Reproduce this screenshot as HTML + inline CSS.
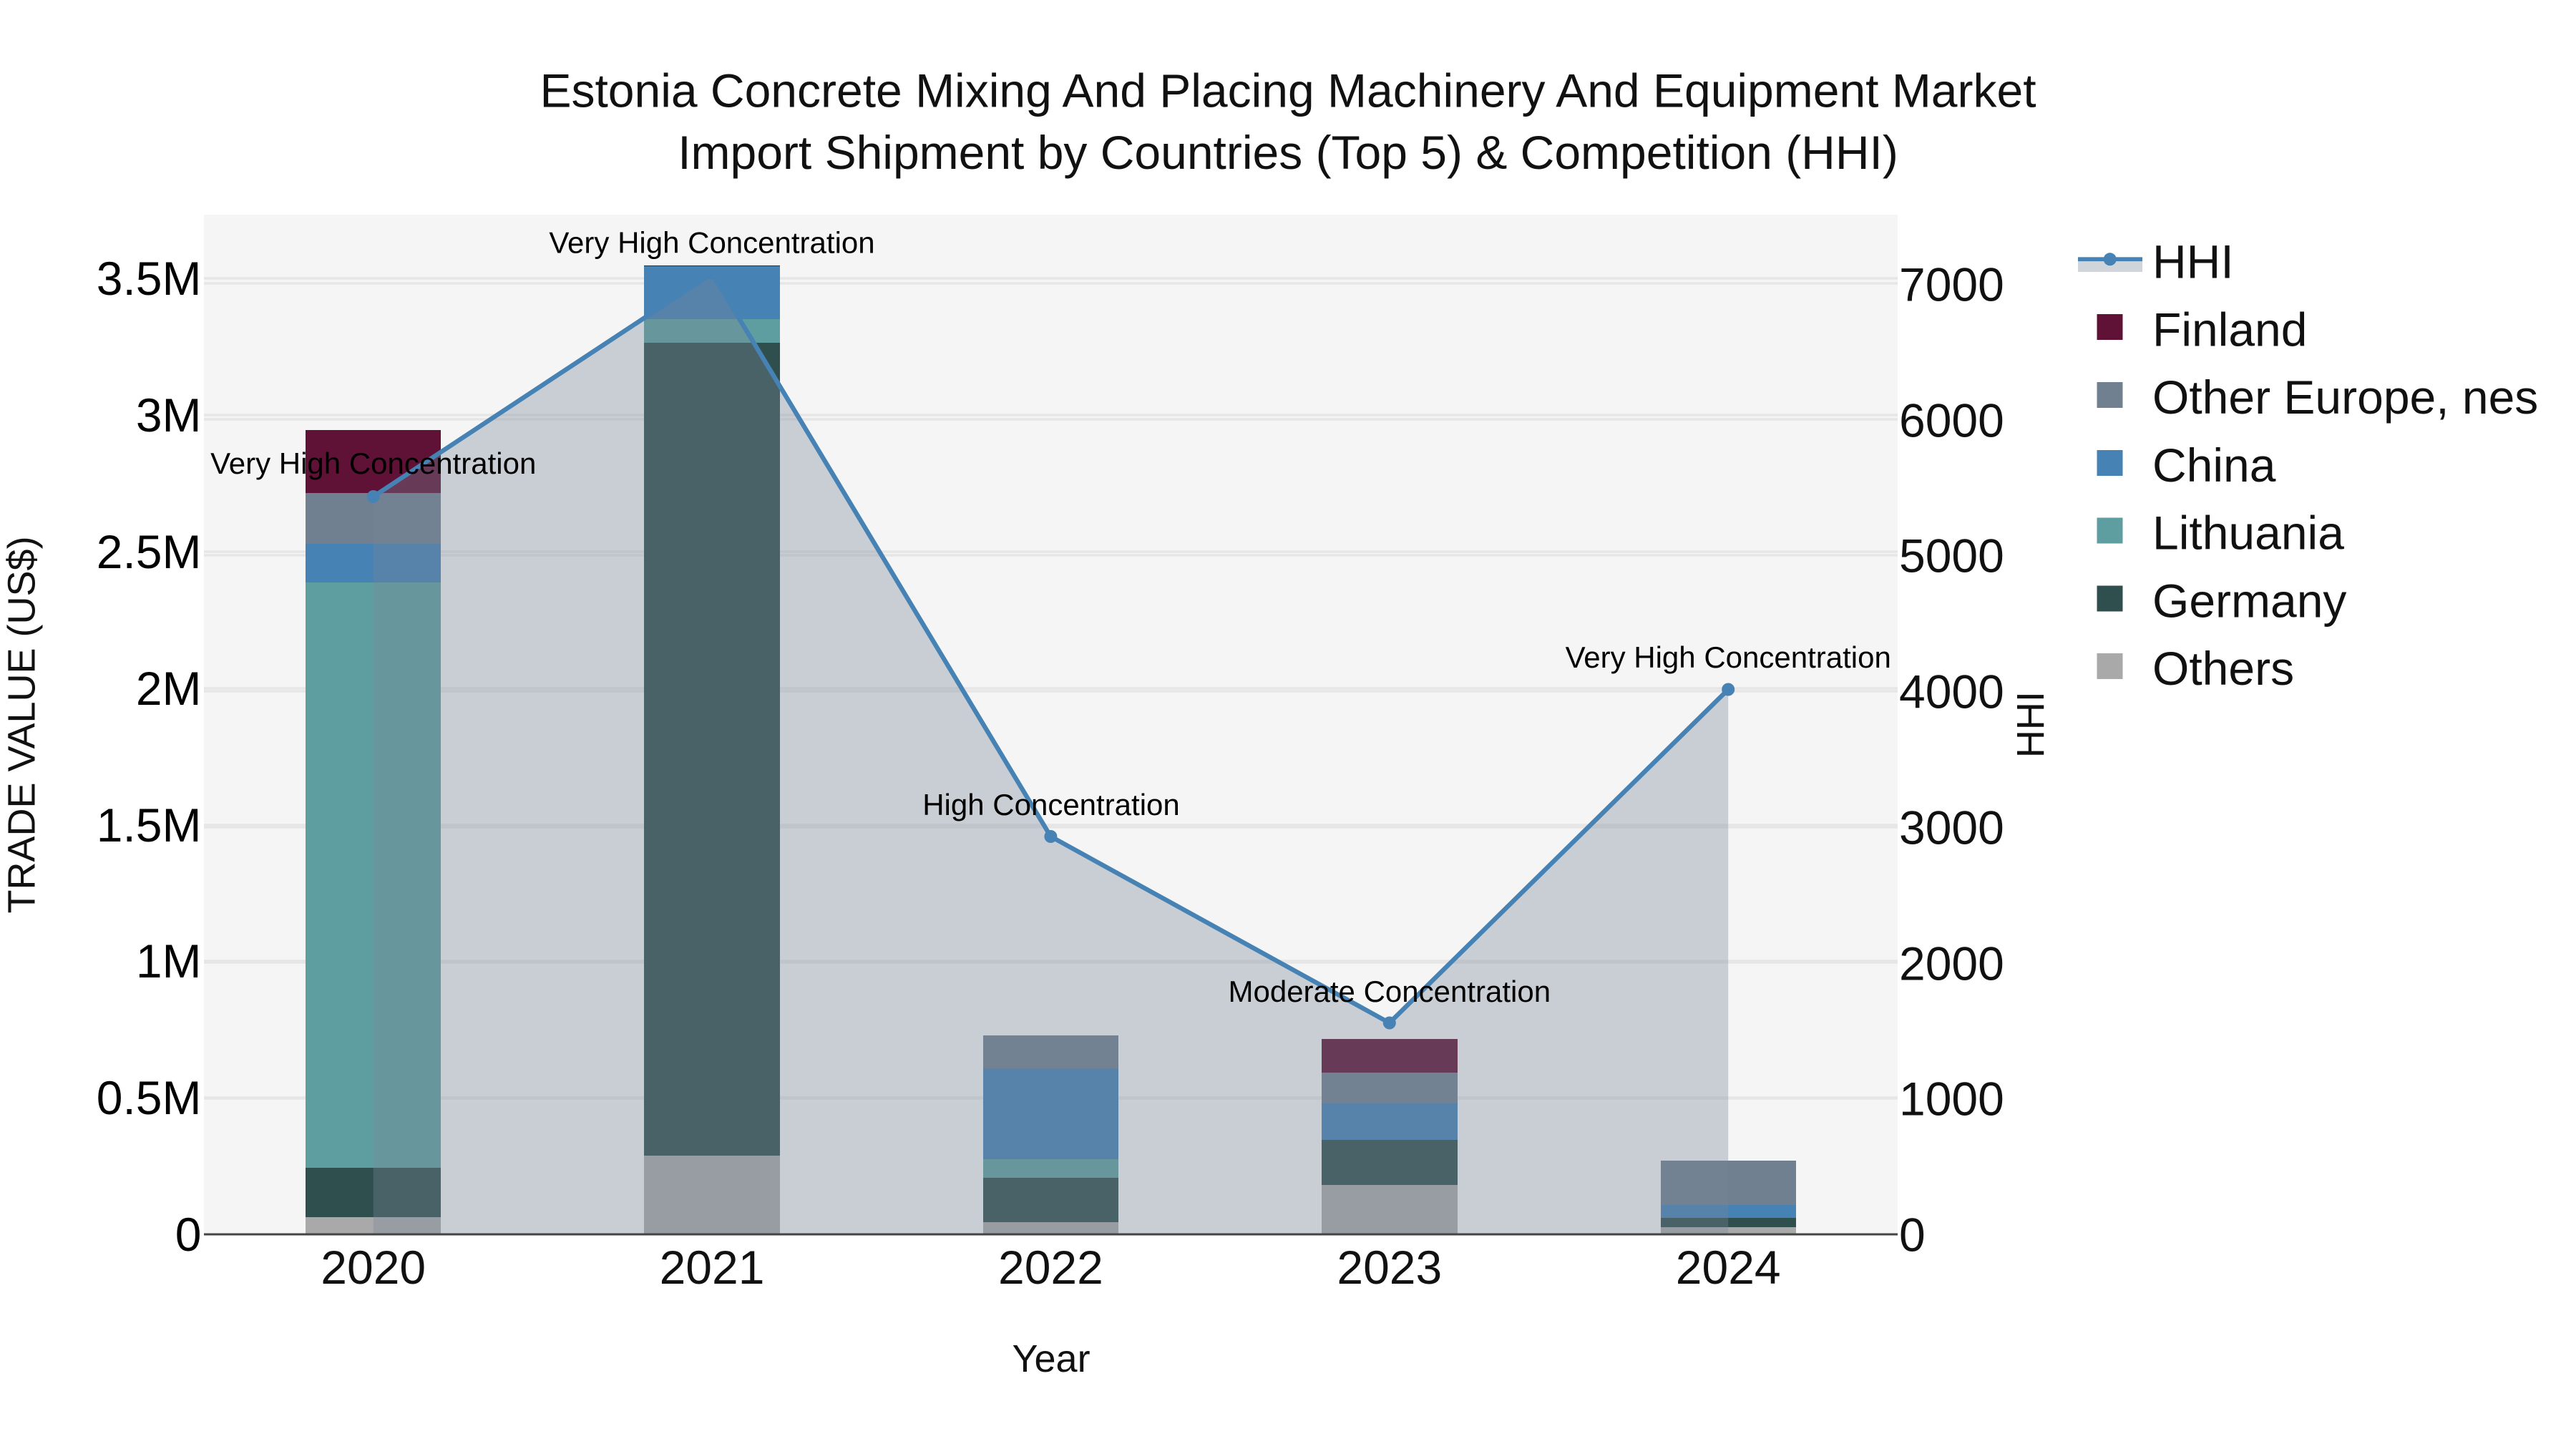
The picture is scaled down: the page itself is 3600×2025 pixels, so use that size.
<!DOCTYPE html>
<html>
<head>
<meta charset="utf-8">
<style>
html,body{margin:0;padding:0;background:#fff;}
svg{display:block;}
text{font-family:"Liberation Sans",Arial,sans-serif;}
</style>
</head>
<body>
<svg xmlns="http://www.w3.org/2000/svg" width="3600" height="2025" viewBox="0 0 3600 2025">
<rect width="3600" height="2025" fill="#fff"/>
<rect x="285" y="300" width="2367" height="1425" fill="#f5f5f5"/>
<g stroke="#e6e6e6" stroke-width="3.4">
<line x1="285" x2="2652" y1="389" y2="389"/><line x1="285" x2="2652" y1="580" y2="580"/><line x1="285" x2="2652" y1="771" y2="771"/><line x1="285" x2="2652" y1="962" y2="962"/><line x1="285" x2="2652" y1="1153" y2="1153"/><line x1="285" x2="2652" y1="1343" y2="1343"/><line x1="285" x2="2652" y1="1534" y2="1534"/>
<line x1="285" x2="2652" y1="396" y2="396"/><line x1="285" x2="2652" y1="586" y2="586"/><line x1="285" x2="2652" y1="776" y2="776"/><line x1="285" x2="2652" y1="966" y2="966"/><line x1="285" x2="2652" y1="1156" y2="1156"/><line x1="285" x2="2652" y1="1345" y2="1345"/><line x1="285" x2="2652" y1="1535" y2="1535"/>
</g>
<!-- 2020 -->
<rect x="427" y="601" width="189" height="88" fill="#5f1235"/>
<rect x="427" y="689" width="189" height="71" fill="#708090"/>
<rect x="427" y="760" width="189" height="54" fill="#4682b4"/>
<rect x="427" y="814" width="189" height="818" fill="#5f9ea0"/>
<rect x="427" y="1632" width="189" height="69" fill="#2f4f4f"/>
<rect x="427" y="1701" width="189" height="24" fill="#a9a9a9"/>
<!-- 2021 -->
<rect x="900" y="371" width="190" height="1.5" fill="#5f1235"/>
<rect x="900" y="372" width="190" height="74" fill="#4682b4"/>
<rect x="900" y="446" width="190" height="33" fill="#5f9ea0"/>
<rect x="900" y="479" width="190" height="1136" fill="#2f4f4f"/>
<rect x="900" y="1615" width="190" height="110" fill="#a9a9a9"/>
<!-- 2022 -->
<rect x="1374" y="1447" width="189" height="46" fill="#708090"/>
<rect x="1374" y="1493" width="189" height="127" fill="#4682b4"/>
<rect x="1374" y="1620" width="189" height="26" fill="#5f9ea0"/>
<rect x="1374" y="1646" width="189" height="62" fill="#2f4f4f"/>
<rect x="1374" y="1708" width="189" height="17" fill="#a9a9a9"/>
<!-- 2023 -->
<rect x="1847" y="1452" width="190" height="47" fill="#5f1235"/>
<rect x="1847" y="1499" width="190" height="43" fill="#708090"/>
<rect x="1847" y="1542" width="190" height="51" fill="#4682b4"/>
<rect x="1847" y="1593" width="190" height="63" fill="#2f4f4f"/>
<rect x="1847" y="1656" width="190" height="69" fill="#a9a9a9"/>
<!-- 2024 -->
<rect x="2321" y="1622" width="189" height="62" fill="#708090"/>
<rect x="2321" y="1684" width="189" height="18" fill="#4682b4"/>
<rect x="2321" y="1702" width="189" height="13" fill="#2f4f4f"/>
<rect x="2321" y="1715" width="189" height="10" fill="#a9a9a9"/>
<!-- HHI area -->
<polygon points="521.7,1725 521.7,694 995,382 1468.4,1169 1941.8,1429.5 2415.2,963.5 2415.2,1725" fill="#778899" fill-opacity="0.35"/>
<line x1="285" x2="2652" y1="1725" y2="1725" stroke="#444" stroke-width="3"/>
<polyline points="521.7,694 995,382 1468.4,1169 1941.8,1429.5 2415.2,963.5" fill="none" stroke="#4682b4" stroke-width="6.4" stroke-linejoin="round"/>
<g fill="#4682b4">
<circle cx="521.7" cy="694" r="9"/><circle cx="995" cy="382" r="9"/><circle cx="1468.4" cy="1169" r="9"/><circle cx="1941.8" cy="1429.5" r="9"/><circle cx="2415.2" cy="963.5" r="9"/>
</g>
<!-- title -->
<g font-size="66" fill="#111" text-anchor="middle">
<text x="1800" y="149.5">Estonia Concrete Mixing And Placing Machinery And Equipment Market</text>
<text x="1800" y="236">Import Shipment by Countries (Top 5) &amp; Competition (HHI)</text>
</g>
<!-- annotations -->
<g font-size="42" fill="#000" text-anchor="middle">
<text x="521.7" y="662">Very High Concentration</text>
<text x="995" y="353.5">Very High Concentration</text>
<text x="1469" y="1139">High Concentration</text>
<text x="1941.8" y="1400">Moderate Concentration</text>
<text x="2415.2" y="933">Very High Concentration</text>
</g>
<!-- left ticks -->
<g font-size="66" fill="#000" text-anchor="end">
<text x="281.5" y="412">3.5M</text><text x="281.5" y="603">3M</text><text x="281.5" y="794">2.5M</text><text x="281.5" y="985">2M</text><text x="281.5" y="1176">1.5M</text><text x="281.5" y="1366">1M</text><text x="281.5" y="1557">0.5M</text><text x="281.5" y="1748">0</text>
</g>
<!-- right ticks -->
<g font-size="66" fill="#111">
<text x="2654" y="420.5">7000</text><text x="2654" y="610.5">6000</text><text x="2654" y="799.5">5000</text><text x="2654" y="989.5">4000</text><text x="2654" y="1179.5">3000</text><text x="2654" y="1369.5">2000</text><text x="2654" y="1558.5">1000</text><text x="2654" y="1748.5">0</text>
</g>
<!-- x ticks -->
<g font-size="66" fill="#111" text-anchor="middle">
<text x="521.7" y="1794">2020</text><text x="995" y="1794">2021</text><text x="1468.4" y="1794">2022</text><text x="1941.8" y="1794">2023</text><text x="2415.2" y="1794">2024</text>
</g>
<!-- axis titles -->
<text x="1469" y="1917" font-size="54" fill="#111" text-anchor="middle">Year</text>
<text transform="translate(48.5 1013) rotate(-90)" font-size="54" fill="#111" text-anchor="middle">TRADE VALUE (US$)</text>
<text transform="translate(2856 1012.6) rotate(-90)" font-size="54" fill="#111" text-anchor="middle">HHI</text>
<!-- legend -->
<rect x="2904" y="359" width="90" height="21" fill="#778899" fill-opacity="0.35"/>
<rect x="2904" y="359.5" width="90" height="5.6" fill="#4682b4"/>
<circle cx="2948.7" cy="362.3" r="9" fill="#4682b4"/>
<rect x="2930.5" y="439" width="36" height="36" fill="#5f1235"/>
<rect x="2930.5" y="534" width="36" height="36" fill="#708090"/>
<rect x="2930.5" y="629" width="36" height="36" fill="#4682b4"/>
<rect x="2930.5" y="723.5" width="36" height="36" fill="#5f9ea0"/>
<rect x="2930.5" y="818.5" width="36" height="36" fill="#2f4f4f"/>
<rect x="2930.5" y="913" width="36" height="36" fill="#a9a9a9"/>
<g font-size="66" fill="#111">
<text x="3008" y="388.5">HHI</text>
<text x="3008" y="483.5">Finland</text>
<text x="3008" y="578">Other Europe, nes</text>
<text x="3008" y="673">China</text>
<text x="3008" y="767.5">Lithuania</text>
<text x="3008" y="862.5">Germany</text>
<text x="3008" y="957">Others</text>
</g>
</svg>
</body>
</html>
